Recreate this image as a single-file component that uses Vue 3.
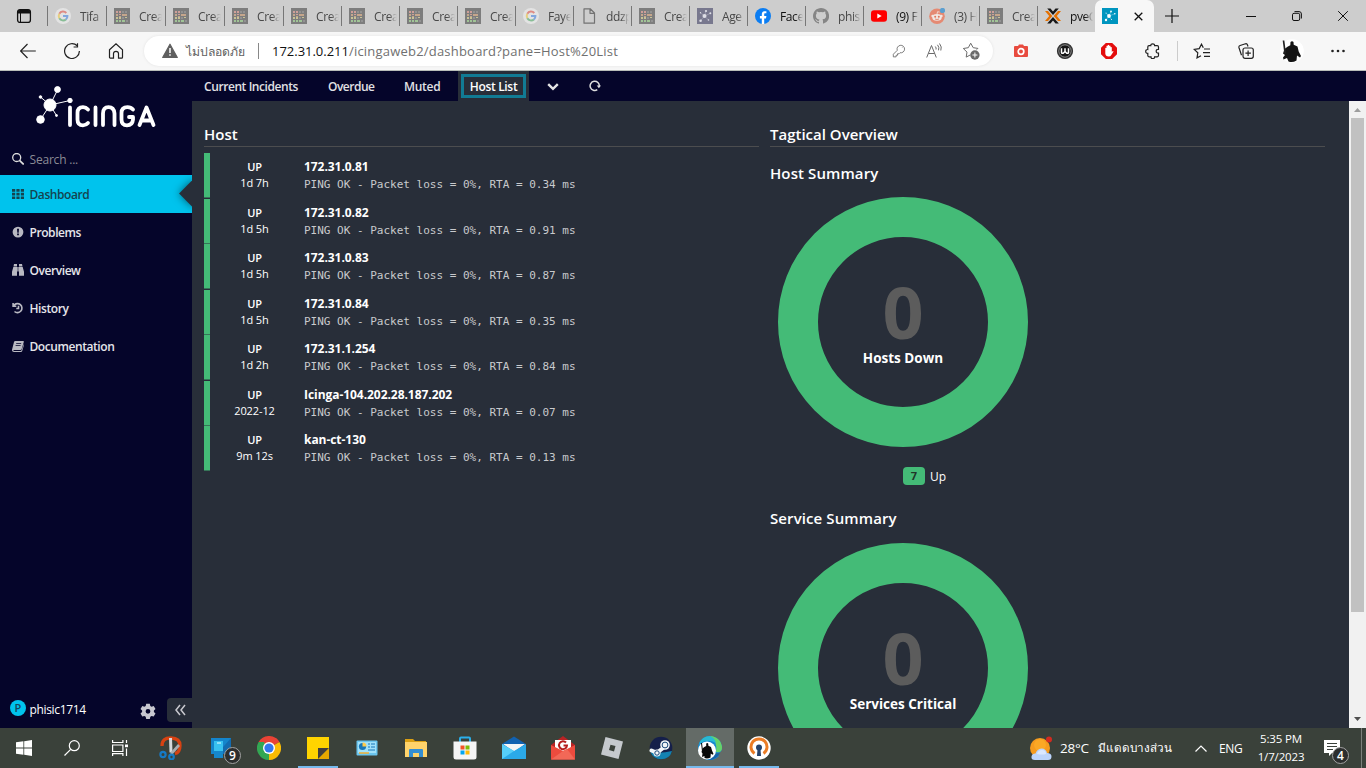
<script setup>
const tabs = [
  { icon: 'google', text: 'Tifa', dim: true, wide: true },
  { icon: 'sheet', text: 'Crea', dim: true, wide: true },
  { icon: 'sheet', text: 'Crea', dim: true, wide: true },
  { icon: 'sheet', text: 'Crea', dim: true, wide: true },
  { icon: 'sheet', text: 'Crea', dim: true },
  { icon: 'sheet', text: 'Crea', dim: true },
  { icon: 'sheet', text: 'Crea', dim: true },
  { icon: 'sheet', text: 'Crea', dim: true },
  { icon: 'google', text: 'Faye', dim: true },
  { icon: 'page', text: 'ddzp', dim: true },
  { icon: 'sheet', text: 'Crea', dim: true },
  { icon: 'agent', text: 'Age', dim: true },
  { icon: 'facebook', text: 'Face' },
  { icon: 'github', text: 'phis', dim: true },
  { icon: 'youtube', text: '(9) F' },
  { icon: 'reddit', text: '(3) H', dim: true },
  { icon: 'sheet', text: 'Crea', dim: true },
  { icon: 'proxmox', text: 'pveC' }
]
const nav = [
  { icon: 'grid', text: 'Dashboard', active: true },
  { icon: 'alert', text: 'Problems' },
  { icon: 'binoculars', text: 'Overview' },
  { icon: 'history', text: 'History' },
  { icon: 'book', text: 'Documentation' }
]
const hosts = [
  { since: '1d 7h', name: '172.31.0.81', rta: '0.34' },
  { since: '1d 5h', name: '172.31.0.82', rta: '0.91' },
  { since: '1d 5h', name: '172.31.0.83', rta: '0.87' },
  { since: '1d 5h', name: '172.31.0.84', rta: '0.35' },
  { since: '1d 2h', name: '172.31.1.254', rta: '0.84' },
  { since: '2022-12', name: 'Icinga-104.202.28.187.202', rta: '0.07' },
  { since: '9m 12s', name: 'kan-ct-130', rta: '0.13' }
]
const apps = [
  { icon: 'snip' }, { icon: 'phone', badge: '9' }, { icon: 'chrome' }, { icon: 'notes', open: true },
  { icon: 'panel' }, { icon: 'folder' }, { icon: 'store' }, { icon: 'mail' }, { icon: 'gmail' },
  { icon: 'roblox' }, { icon: 'steam' }, { icon: 'edge', focused: true }, { icon: 'vpn', open: true }
]
</script>

<template>
  <div class="screen">
    <svg class="defs" aria-hidden="true">
      <symbol id="google" viewBox="0 0 16 16"><circle cx="8" cy="8" r="8" fill="#e3e3e3"/><g fill="none" stroke-width="2"><path d="M4.300 5.700A4.400 4.400 0 0 1 11.300 5" stroke="#de8b84"/><path d="M4.300 5.700a5 5 0 0 0 0 4.600" stroke="#e6cf80"/><path d="M4.300 10.300A4.400 4.400 0 0 0 10.900 11.400" stroke="#88bd96"/><path d="M8 8h4.400a4.400 4.400 0 0 1-1.500 3.400" stroke="#83a7de"/></g></symbol>
      <symbol id="sheet" viewBox="0 0 16 16"><path fill="#7d7d7d" d="M0 0h16v16H0z"/><g><path fill="#cf9f99" d="M2 3h2v2H2zM5 3h2v2H5zM5 6h2v1H5z"/><path fill="#c5a68c" d="M2 6h2v2H2zM8 6h5v2H8zM5 8h2v1H5z"/><path fill="#c8c396" d="M2 9h2v2H2zM5 9h2v2H5zM11 9h2v1h-2z"/><path fill="#a0c496" d="M2 12h2v2H2zM5 12h2v2H5zM8 12h3v2H8z"/><path fill="#929292" d="M8 3h2v2H8zM11 3h2v2h-2zM8 9h2v2H8zM12 12h2v2h-2z"/></g></symbol>
      <symbol id="page" viewBox="0 0 16 16"><path d="M3 .8h6.200L13.500 5v10.200H3zM9 1v4.300h4.300" fill="none" stroke="#727272" stroke-width="1.200" stroke-linejoin="round"/></symbol>
      <symbol id="agent" viewBox="0 0 16 16"><path fill="#78788e" d="M0 0h16v16H0z"/><path stroke="#b5b5c4" stroke-width=".5" d="M7.500 8L9 3M7.500 8l6-2.700M7.500 8l-4 4.800M7.500 8l-4-3.200M7.500 8l4 4"/><g fill="#dedee6"><circle cx="7.500" cy="8" r="2"/><circle cx="9" cy="3" r="1.100"/><circle cx="13.300" cy="5.300" r="1"/><circle cx="3.600" cy="12.800" r="1.300"/><circle cx="3.500" cy="4.800" r=".7"/><circle cx="11.500" cy="12" r=".8"/></g></symbol>
      <symbol id="facebook" viewBox="0 0 16 16"><circle cx="8" cy="8" r="8" fill="#0b7df2"/><path fill="#fff" d="M6.800 16v-5.500H4.900V8.100h1.900V6.400c0-2.100 1.200-3.200 3-3.200l1.600.1v2h-1c-1 0-1.200.5-1.200 1.200v1.600h2.200l-.4 2.400H9.200V16z"/></symbol>
      <symbol id="github" viewBox="0 0 16 16"><path fill="#858585" d="M8 0C3.600 0 0 3.600 0 8c0 3.500 2.300 6.500 5.500 7.600.4.100.5-.2.500-.4v-1.400c-2.200.5-2.700-1-2.700-1-.4-.9-.9-1.100-.9-1.100-.7-.5.100-.5.100-.5.800.1 1.200.8 1.200.8.700 1.200 1.900.9 2.300.7.100-.5.300-.9.500-1.100-1.800-.2-3.600-.9-3.600-4 0-.9.300-1.600.8-2.100-.1-.2-.4-1 .1-2.100 0 0 .7-.2 2.200.8a7.600 7.600 0 0 1 4 0c1.500-1 2.200-.8 2.200-.8.4 1.100.2 1.900.1 2.100.5.6.8 1.300.8 2.100 0 3.100-1.900 3.700-3.700 3.900.3.300.6.800.6 1.500v2.200c0 .2.100.5.600.4A8 8 0 0 0 8 0z"/></symbol>
      <symbol id="youtube" viewBox="0 0 16 16"><rect y="2.300" width="16" height="11.500" rx="3" fill="#f00"/><path fill="#fff" d="M6.300 5.500v5L10.700 8z"/></symbol>
      <symbol id="reddit" viewBox="0 0 16 16"><circle cx="8" cy="8.200" r="7.800" fill="#e58a73"/><ellipse cx="8" cy="9.400" rx="4.700" ry="3.300" fill="#f1e7e3"/><circle cx="3.500" cy="8" r="1.200" fill="#f1e7e3"/><circle cx="12.500" cy="8" r="1.200" fill="#f1e7e3"/><circle cx="6.200" cy="8.700" r="1" fill="#dd765c"/><circle cx="9.800" cy="8.700" r="1" fill="#dd765c"/><path d="M8 6l.6-2.300 2 .4" fill="none" stroke="#f1e7e3" stroke-width=".8"/><path d="M6 11q2 1 4 0" fill="none" stroke="#dd765c" stroke-width=".8"/><circle cx="13.500" cy="2.500" r="2.600" fill="#5b9fd0"/></symbol>
      <symbol id="proxmox" viewBox="0 0 16 16"><path fill="#171717" d="M2.200.5h3.300L8 3.400 10.500.5h3.300L8 7zM2.200 15.500h3.300L8 12.600l2.500 2.900h3.300L8 9z"/><path fill="#e57000" d="M0 3h3l4.300 5L3 13H0l4.200-5zM16 3h-3L8.700 8l4.300 5h3l-4.200-5z"/></symbol>
      <symbol id="icinga-fav" viewBox="0 0 16 16"><path fill="#0095bf" d="M0 0h16v16H0z"/><path stroke="#8fd0e4" stroke-width=".5" d="M7 8l2-4.500M7 8l5.800-2.200M7 8l-3 4M7 8L4 5M7 8l2.500 3.500"/><g fill="#fff"><circle cx="7" cy="8" r="1.900"/><circle cx="9" cy="3.500" r=".9"/><circle cx="12.800" cy="5.800" r=".8"/><circle cx="4" cy="12" r="1.200"/><circle cx="4" cy="5" r=".5"/><circle cx="9.500" cy="11.500" r=".5"/></g></symbol>

      <symbol id="back" viewBox="0 0 16 16"><path d="M.5 8h15.300M7.500 1L.6 8l6.900 7"/></symbol>
      <symbol id="reload" viewBox="0 0 16 16"><path d="M13.200 2.800A7.400 7.400 0 1 0 15.400 8M13.500.2v3.800H9.600"/></symbol>
      <symbol id="home" viewBox="0 0 16 16"><path d="M1.500 6.700L8 .9l6.500 5.800v7.500q0 .9-.9.900H10.500v-4.500q0-2.200-2.500-2.200t-2.500 2.200v4.500H2.400q-.9 0-.9-.9z"/></symbol>
      <symbol id="key" viewBox="0 0 16 16"><path d="M6 7.200A4.300 4.300 0 1 1 9.200 10L8 11.200H6.300v1.700H4.700v1.800H1.500v-3zM11.800 4.100v.5"/></symbol>
      <symbol id="star" viewBox="0 0 18 18"><path d="M14.700 7.600l1.200-1.200-4.700-.7L8.700 1.200 6.300 5.700l-5 .8L5 10.100l-.8 5 4-2.100"/><circle cx="12.900" cy="13" r="4.700" fill="#6a6a6a" stroke="none"/><path d="M12.900 10.500v5M10.400 13h5" stroke="#fff"/></symbol>
      <symbol id="puzzle" viewBox="0 0 16 16"><path d="M4 2.700h1.800C5.600.2 9.800.1 9.600 2.700h2.700q1.200 0 1.200 1.200v2.400c-3.100-.6-3.100 4.200 0 3.800v2.500q0 1.200-1.200 1.200H9.600c.2 2.500-4 2.500-3.600 0H4q-1.200 0-1.200-1.200v-2.300C0 10.600 0 6.200 2.800 6.500V3.900q0-1.200 1.200-1.200z"/></symbol>
      <symbol id="favorites" viewBox="0 0 18 16"><path d="M10.300 4.800L8.500 1.200 6.200 5.600l-5 .8 3.600 3.400-.8 5 4-2.100M11 6h6M10 9.700h7M11 13.300h6"/></symbol>
      <symbol id="collections" viewBox="0 0 16 16"><path d="M3.500 12.200L1 4.700q-.5-1.700 1.100-2.200L7.500.8q1.500-.4 2 1.200l.5 1.500"/><rect x="5" y="5" width="10.300" height="10.300" rx="2"/><path d="M10.100 7.400v5.500M7.400 10.100h5.500"/></symbol>
      <symbol id="person" viewBox="0 0 24 24"><circle cx="12" cy="12" r="11.800" fill="#fff"/><path fill="#141414" d="M10.500 3q1.500-1.500 3 0l.2 2.800 3.800 1.700 1.200 5 2.300 4.500-1 1.500-3-2-.5 5q-4 2.500-8 1L7 19l-3.500 1.500-.5-2 2-2.500-2-1.500 1.500-4.500 3-2.200 2.800-1.500z"/><path stroke="#222" stroke-width="1.700" d="M3.500 1.500l1.700 13"/></symbol>

      <symbol id="grid" viewBox="0 0 12 12"><path d="M0 1h3.200v2.700H0zM4.400 1h3.200v2.700H4.400zM8.800 1H12v2.700H8.800zM0 4.700h3.200v2.700H0zM4.400 4.700h3.200v2.700H4.400zM8.800 4.700H12v2.700H8.800zM0 8.400h3.200v2.700H0zM4.400 8.400h3.200v2.700H4.400zM8.800 8.400H12v2.700H8.800z"/></symbol>
      <symbol id="alert" viewBox="0 0 12 12"><path fill-rule="evenodd" d="M6 .7a5.400 5.400 0 1 1 0 10.800A5.400 5.400 0 0 1 6 .7zM5 2.700l.3 4h1.400l.3-4zM5.100 7.600v1.700h1.800V7.600z"/></symbol>
      <symbol id="binoculars" viewBox="0 0 12 12"><path d="M2 0h3v2.500H1.500zM7 0h3l.5 2.500H7zM1.300 3H5v8.700H-.2V8.500zM7 3h3.700l1.500 5.500v3.200H7zM5.300 3h1.400v4.500H5.300z"/></symbol>
      <symbol id="history" viewBox="0 0 12 12"><path d="M2 3.200A4.500 4.500 0 1 1 2.500 9.500M1.100 1v3.200h3.200M6.500 3.800v2.700H4.300" fill="none" stroke="currentColor" stroke-width="1.600"/></symbol>
      <symbol id="book" viewBox="0 0 12 12"><path fill-rule="evenodd" d="M3.200 1h8q.9 0 .6 1L9.700 9q-.3 1-1.300 1H1.800q-.7 0-.5.500.2.400.9.400h6.500q.7 0 1-.8L11.800 4q.3.500.1 1.200L10.200 11q-.3 1-1.300 1H2Q0 12 0 10.300q0-.7.200-1.300L2 2q.3-1 1.200-1zM4.300 3.200l-.2.700h5l.2-.7zM3.700 5.200l-.2.700h5l.2-.7z"/></symbol>

      <symbol id="snip" viewBox="0 0 24 24"><path d="M3 10Q3 1.700 12 2t9 7.500-5 8" fill="none" stroke="#d64212" stroke-width="3.300"/><path d="M10 2h3l.5 14-3 .5z" fill="#d5d8db"/><path d="M19 8l2 2-8 9-2-2z" fill="#a9adb2"/><g fill="none" stroke="#167ac6" stroke-width="2.200"><circle cx="4" cy="18.500" r="2.600"/><circle cx="12.500" cy="21" r="2.300"/></g></symbol>
      <symbol id="phone" viewBox="0 0 24 24"><path fill="#126bb0" d="M3 2h20v16H3z"/><path fill="#1485cb" d="M3 2h20L9 18H3z"/><path fill="#38c1f0" d="M6 5h9v17H6z"/><path fill="#1687cb" d="M6 15h9v7H6z"/><path stroke="#e6ffff" d="M9 7h4"/></symbol>
      <symbol id="chrome" viewBox="0 0 24 24"><path fill="#e94335" d="M12 12L1.600 6a12 12 0 0 1 20.800 0z"/><path fill="#33a753" d="M12 12v12A12 12 0 0 1 1.600 6z"/><path fill="#fbbc04" d="M12 12L22.400 6A12 12 0 0 1 12 24z"/><path fill="#e94335" d="M12 6h10.400L19 2H5z"/><path fill="#33a753" d="M1.600 6l5.200 9L12 18 7 6z"/><path fill="#fbbc04" d="M17.200 15L12 24l7-4V9z"/><circle cx="12" cy="12" r="6" fill="#fff"/><circle cx="12" cy="12" r="4.600" fill="#3478ed"/></symbol>
      <symbol id="notes" viewBox="0 0 24 24"><path fill="#ffd400" d="M1 1h22v22H1z"/><path fill="#e7a700" d="M12 23L23 12v11z"/><path fill="#423f3d" d="M12 12h11L12 23z"/></symbol>
      <symbol id="panel" viewBox="0 0 24 24"><rect x="1.500" y="4.500" width="21" height="15" rx="1" fill="#6bc5ee"/><path fill="#a1e1fa" d="M3 6h18v11H3z"/><circle cx="7.500" cy="10.500" r="3.600" fill="#1877b9"/><path fill="#ffca4a" d="M7.500 6.500v4h4a4 4 0 0 0-4-4z"/><path stroke="#1877b9" d="M13 8h2m1 0h4M13 11h2m1 0h4M13 14h7"/><path stroke="#f0ac32" stroke-width="1.500" d="M4 17h10"/></symbol>
      <symbol id="folder" viewBox="0 0 24 24"><path fill="#dca013" d="M1 3h8l2 2h11v5H1z"/><path fill="#ffd36b" d="M1 6h22v15H1z"/><path fill="#348ed2" d="M5 21v-7q0-1 1-1h12q1 0 1 1v7h-4v-4H9v4z"/></symbol>
      <symbol id="store" viewBox="0 0 24 24"><path d="M7 6V2.500q0-1 1-1h8q1 0 1 1V6" fill="none" stroke="#2bafe9" stroke-width="2"/><path fill="#f5f5f5" d="M.5 5.500h23V21q0 2.500-2.500 2.500H3Q.5 23.500.5 21z"/><path fill="#f35325" d="M7.500 9.500h4v4h-4z"/><path fill="#81bc06" d="M12.500 9.500h4v4h-4z"/><path fill="#05a6f0" d="M7.500 14.500h4v4h-4z"/><path fill="#ffba08" d="M12.500 14.500h4v4h-4z"/></symbol>
      <symbol id="mail" viewBox="0 0 24 24"><path fill="#1262b0" d="M0 8l12-7.500L24 8v4H0z"/><path fill="#f5f5f5" d="M1 8h22L12 16z"/><path fill="#2ba9e8" d="M0 8l12 7 12-7v15H0z"/><path fill="#56cef8" d="M0 8l12 7L0 23z"/></symbol>
      <symbol id="gmail" viewBox="0 0 24 24"><path fill="#b92324" d="M0 9l12-9 12 9v8H0z"/><path fill="#fff" d="M4 4h16v12H4z"/><path d="M15 6.500A4 4 0 1 0 16 9.500h-3.500" fill="none" stroke="#b51d1d" stroke-width="2"/><path fill="#ed4b3e" d="M0 9l12 6 12-6v14.500H0z"/><path fill="#f26857" d="M0 23.500L12 15l4-2 8 10.500z"/></symbol>
      <symbol id="roblox" viewBox="0 0 24 24"><path fill="#c5c9cd" fill-rule="evenodd" d="M5.500 1L23 5.500 18.500 23 1 18.500zM10.500 8.800L9 14l5 1.500L15.500 10z"/></symbol>
      <symbol id="steam" viewBox="0 0 24 24"><circle cx="12" cy="12" r="11.300" fill="#151f4a"/><path fill="#1382b2" d="M1.500 16q10 2 21.500-1-2 8-11 8.300Q4 23 1.500 16z"/><path fill="none" stroke="#f2f5f8" stroke-width="4" stroke-linecap="round" d="M2.500 14.500l5.500 2.300 7-5.500"/><circle cx="16" cy="9" r="4.800" fill="#f2f5f8"/><circle cx="8" cy="17" r="3.500" fill="#f2f5f8"/><circle cx="16" cy="9" r="2.900" fill="#f2f5f8" stroke="#174778"/><circle cx="8" cy="17" r="2.200" fill="none" stroke="#174778"/></symbol>
      <symbol id="edge" viewBox="0 0 24 24"><path fill="#168ad0" d="M0 12A12 12 0 1 1 24 12c0 5-5 6-8 5l5 3q-4 4-9 4A12 12 0 0 1 0 12z"/><path fill="#67d36a" d="M12 0a12 12 0 0 1 12 12q0 5-6 4 2-10-6-16z"/><path fill="#29b9d3" d="M1 8Q4 0 12 0q5 2 6 7-9-5-17 1z"/><path fill="#1664ab" d="M14 18l8-1q-3 6-10 7z"/><circle cx="9" cy="14.500" r="9" fill="#fff"/><path fill="#090909" d="M8.200 7.500q1-1 2 0l.2 2.300 2.600 1.200 1 3.500 1.500 3.500-1 .8-1.700-1.300-.3 4q-3 1.500-6 .5L6.500 20 4 21l.5-3.500L3.500 16l1-3.500 1.800-1.500 1.900-1z"/><path stroke="#090909" d="M3.500 7l1 8"/></symbol>
      <symbol id="vpn" viewBox="0 0 24 24"><circle cx="12" cy="12" r="11.700" fill="#fff"/><path d="M7.500 17.500A8 8 0 1 1 16.500 17.500" fill="none" stroke="#ea7c25" stroke-width="3"/><circle cx="12" cy="11.500" r="3" fill="#24426b"/><path fill="#24426b" d="M10.500 13h3l.5 7h-4z"/></symbol>
    </svg>

    <header class="tabstrip">
      <div class="tab-menu"><svg width="16" height="16" viewBox="0 0 16 16"><rect x="1.600" y="1.600" width="12.800" height="12.800" rx="2.500" fill="none" stroke="#111" stroke-width="1.300"/><path d="M2 5V3.500Q2 2 4 2h8q2 0 2 1.500V5z" stroke="#111" fill="#111"/><path d="M4.500 5v9" stroke="#111"/></svg></div>
      <div v-for="(t, i) in tabs" :key="i" class="tab" :class="{ wide: t.wide, dim: t.dim }">
        <svg class="fav"><use :href="'#' + t.icon" /></svg><span>{{ t.text }}</span>
      </div>
      <div class="tab-active"><svg class="fav"><use href="#icinga-fav" /></svg><svg width="9" height="9" viewBox="0 0 9 9"><path d="M.7.7l7.600 7.600M8.300.7L.7 8.300" stroke="#111" stroke-width="1.300"/></svg></div>
      <div class="new-tab"><svg width="14" height="14" viewBox="0 0 14 14"><path d="M7 0v14M0 7h14" stroke="#111" stroke-width="1.200"/></svg></div>
      <div class="win">
        <svg viewBox="0 0 10 10"><path d="M0 5.500h10"/></svg>
        <svg viewBox="0 0 10 10"><rect x=".5" y="2.300" width="7.200" height="7.200" rx="1.500"/><path d="M2.500.6H7Q9.400.6 9.400 3v4.500"/></svg>
        <svg viewBox="0 0 10 10"><path d="M.2.2l9.600 9.600M9.800.2L.2 9.800"/></svg>
      </div>
    </header>

    <div class="toolbar">
      <div class="slot"><svg><use href="#back" /></svg></div>
      <div class="slot"><svg><use href="#reload" /></svg></div>
      <div class="slot"><svg><use href="#home" /></svg></div>
      <div class="address">
        <svg class="warn" viewBox="0 0 16 16"><path fill="#5f5f5f" stroke="#5f5f5f" stroke-linejoin="round" d="M8 1.200L15.300 14.500H.7z"/><path d="M8 5v5M8 11.300v1.500" stroke="#fff" stroke-width="1.500"/></svg>
        <span class="unsafe">ไม่ปลอดภัย</span>
        <i class="bar"></i>
        <span class="url"><b>172.31.0.211</b>/icingaweb2/dashboard?pane=Host%20List</span>
        <span class="address-icons">
          <svg width="14" height="14"><use href="#key" /></svg>
          <svg width="16" height="16" viewBox="0 0 16 16"><path d="M.7 14.500L5.500 2.500 10.300 14.500M2.500 10.500h6M9.300 3.500q1.300 1.500.7 3M11.500 1.800q2.200 2.500 1 5.500M13.500.5q2.800 3.500 1.300 7"/></svg>
          <svg width="18" height="18"><use href="#star" /></svg>
        </span>
      </div>
      <div class="extensions">
        <div class="slot"><svg viewBox="0 0 16 16"><path d="M2 3h3l1-1.500h4L11 3h3q1 0 1 1v9q0 1-1 1H2q-1 0-1-1V4q0-1 1-1z" fill="#e84b3f" stroke="none"/><circle cx="8" cy="8.500" r="2.800" fill="#e84b3f" stroke="#fff" stroke-width="1.700"/></svg></div>
        <div class="slot"><svg viewBox="0 0 16 16"><circle cx="8" cy="8" r="7.500" fill="#161616" stroke="#333"/><circle cx="8" cy="8" r="6.200" fill="none" stroke="#ccc" stroke-width=".7"/><path d="M4.500 5.300v4.200q0 .8.800.8h.9L8 8.500l1.800 1.800h.9q.8 0 .8-.8V5.300M8 5.300v3" stroke="#fff" stroke-width="1.500"/></svg></div>
        <div class="slot"><svg viewBox="0 0 16 16"><path d="M4.800 0h6.400L16 4.800v6.400L11.200 16H4.800L0 11.200V4.800z" fill="#e40d0d" stroke="none"/><path fill="#fff" stroke="none" d="M4.300 5q.8-.7 1.200 0V3q.8-1 1.300 0v-.8q.8-.8 1.300 0V3q1-.8 1.400 0v1.200q1-.7 1.300.2V9l1-1q.9.100.6.800L10.300 12Q9.500 13.500 7.700 13.500q-3.200 0-3.400-3z"/></svg></div>
        <div class="slot"><svg><use href="#puzzle" /></svg></div>
      </div>
      <div class="profile">
        <div class="slot"><svg class="w18"><use href="#favorites" /></svg></div>
        <div class="slot"><svg><use href="#collections" /></svg></div>
        <div class="slot face"><svg class="avatar"><use href="#person" /></svg></div>
        <div class="slot more"><svg viewBox="0 0 16 16"><g fill="#222" stroke="none"><circle cx="2.500" cy="8" r="1.300"/><circle cx="8" cy="8" r="1.300"/><circle cx="13.500" cy="8" r="1.300"/></g></svg></div>
      </div>
    </div>

    <div class="icinga">
      <aside>
        <svg class="logo" viewBox="0 0 122 44">
          <g stroke="#fff" stroke-width="1" fill="#fff"><path d="M15 19L22.500 4M15 19L5.500 11M15 19L35 14.500M15 19L5.500 33.500M15 19l6.500 10.500"/><circle cx="15" cy="19" r="6"/><circle cx="22.500" cy="3.500" r="2.900"/><circle cx="5.500" cy="11" r="1.300"/><circle cx="35" cy="14.500" r="2.200"/><circle cx="5.500" cy="33.500" r="3.800"/><circle cx="21.500" cy="29.500" r="1"/></g>
          <g fill="none" stroke="#fff" stroke-width="3.800" stroke-linecap="round" stroke-linejoin="round"><path d="M35 21.500V39M53 23.500Q51 21.200 48 21.200 42.500 21.200 42.500 27V33.500Q42.500 39.300 48 39.300 51 39.300 53 37M60.500 21.500V39M68 39V27.500Q68 21.200 73.500 21.200T79.500 27.500V39M98 23.500Q96 21.200 92.500 21.200 86.500 21.200 86.500 27V33.500Q86.500 39.300 92 39.300T98 33.500V31H94M104.500 39L111.500 21.500 118.500 39M108 34.500H115.500"/></g>
        </svg>
        <div class="search"><svg viewBox="0 0 12 12"><circle cx="4.700" cy="4.500" r="4" fill="none" stroke="#ddd" stroke-width="1.300"/><path d="M7.500 7.300l4.200 4.200" stroke="#ddd" stroke-width="1.700"/></svg><span>Search ...</span></div>
        <nav>
          <div v-for="n in nav" :key="n.text" class="item" :class="{ active: n.active }">
            <svg><use :href="'#' + n.icon" /></svg><span>{{ n.text }}</span><i v-if="n.active" class="notch"></i>
          </div>
        </nav>
        <footer>
          <span class="user-dot">P</span><span class="user">phisic1714</span>
          <svg class="gear" viewBox="0 0 16 16"><path fill="#c8c8d0" fill-rule="evenodd" d="M6.200.8h3.600l.5 2.100 1.300.8 2.100-.7 1.800 3.100-1.600 1.500v1.500l1.600 1.500-1.800 3-2.100-.6-1.300.8-.5 2.100H6.200l-.5-2.100-1.300-.8-2.100.6-1.800-3 1.600-1.500V7.600L.5 6.100 2.300 3l2.100.7 1.300-.8zM8 5.900a2.400 2.400 0 1 0 0 4.800 2.400 2.400 0 0 0 0-4.800z"/></svg>
          <span class="collapse"><svg width="11" height="12" viewBox="0 0 11 12"><path d="M5 1L1 6l4 5M10 1L6 6l4 5" fill="none" stroke="#c9c9cf" stroke-width="1.500"/></svg></span>
        </footer>
      </aside>

      <section class="content">
        <div class="panes">
          <span class="p1">Current Incidents</span><span class="p2">Overdue</span><span class="p3">Muted</span>
          <span class="current">Host List</span>
          <svg class="chev" width="12" height="8" viewBox="0 0 12 8"><path d="M1.200 1.200L6 5.800l4.800-4.600" fill="none" stroke="#e5e5e5" stroke-width="2.400"/></svg>
          <svg width="12" height="12" viewBox="0 0 12 12"><path d="M8.300 9.700A4.600 4.600 0 1 1 10.300 6.300" fill="none" stroke="#ddd" stroke-width="1.500"/><path fill="#ddd" d="M7.700 5.500H12L9.900 8.300z"/></svg>
        </div>
        <div class="body">
          <div class="scroll-area">
            <div class="col">
              <h1>Host</h1>
              <ul>
                <li v-for="h in hosts" :key="h.name">
                  <div class="state"><b>UP</b><span>{{ h.since }}</span></div>
                  <div class="info"><strong>{{ h.name }}</strong><code>PING OK - Packet loss = 0%, RTA = {{ h.rta }} ms</code></div>
                </li>
              </ul>
            </div>
            <div class="col">
              <h1>Tagtical Overview</h1>
              <h2>Host Summary</h2>
              <div class="donut"><span class="zero">0</span><span class="label">Hosts Down</span></div>
              <div class="legend"><b>7</b><span>Up</span></div>
              <h2 class="second">Service Summary</h2>
              <div class="donut"><span class="zero">0</span><span class="label">Services Critical</span></div>
            </div>
          </div>
          <div class="scrollbar"><svg width="7" height="4" viewBox="0 0 7 4"><path fill="#9d9d9d" d="M0 4l3.500-4L7 4z"/></svg><i></i><svg width="7" height="4" viewBox="0 0 7 4"><path fill="#505050" d="M0 0l3.500 4L7 0z"/></svg></div>
        </div>
      </section>
    </div>

    <div class="taskbar">
      <div class="sys"><svg width="16" height="16" viewBox="0 0 16 16"><path fill="#fff" d="M0 2.300L7.400 1.300v6.300H0zM8.200 1.200L16 0v7.600H8.200zM0 8.400h7.400v6.300L0 13.700zM8.200 8.400H16V16l-7.800-1.200z"/></svg></div>
      <div class="sys"><svg width="16" height="16" viewBox="0 0 16 16"><circle cx="10.300" cy="5.700" r="5" fill="none" stroke="#fff" stroke-width="1.200"/><path d="M6.700 9.300L.5 15.500" stroke="#fff" stroke-width="1.200"/></svg></div>
      <div class="sys"><svg width="16" height="16" viewBox="0 0 16 16"><path fill="none" stroke="#fff" stroke-width="1.200" d="M.6 0v2.500h10.300V0M.6 5h10.300v6.500H.6zM.6 16v-2.300h10.300V16M14.500 0v3M14.500 8.500V16"/><path fill="#fff" d="M13 4.500h3v2.700h-3z"/></svg></div>
      <div class="apps">
        <div v-for="a in apps" :key="a.icon" class="app" :class="{ open: a.open, focused: a.focused }"><svg><use :href="'#' + a.icon" /></svg><em v-if="a.badge">{{ a.badge }}</em></div>
      </div>
      <div class="tray">
        <svg width="24" height="25" viewBox="0 0 24 25"><circle cx="11" cy="12" r="10" fill="#f69b1e"/><circle cx="11" cy="9" r="6" fill="#ffb52c" opacity=".5"/><circle cx="20" cy="3.500" r="3" fill="#d22b20"/><path fill="#bcd4fb" d="M6 24Q2 24 2.500 20.500 3 17.500 6.500 17.500 8 13 12.500 12.500 17 12.500 18 17q4.500 0 4.500 3.500T19 24z"/><path fill="#dbe8ff" d="M8 18q1-4 5-4t4 4q-4 1-9 0z"/></svg>
        <span class="temp">28°C</span><span class="thai">มีแดดบางส่วน</span>
        <svg class="up" width="12" height="7" viewBox="0 0 12 7"><path d="M.5 6.500L6 1l5.500 5.500" fill="none" stroke="#fff" stroke-width="1.200"/></svg>
        <span class="lang">ENG</span>
        <span class="clock"><span>5:35 PM</span><span>1/7/2023</span></span>
        <span class="notif"><svg width="16" height="16" viewBox="0 0 16 16"><path fill="#fff" d="M0 0h16v13H8l-3 3v-3H0z"/><path stroke="#3b413b" d="M3 3.500h10M3 6.500h10M3 9.500h6"/></svg><em>4</em></span>
        <i class="peek"></i>
      </div>
    </div>
  </div>
</template>

<style>
body { overflow: hidden; }
</style>
<style scoped>
* { box-sizing: border-box; }
.screen { width: 1366px; height: 768px; display: flex; flex-direction: column; overflow: hidden; font-family: "Open Sans", "Noto Sans", sans-serif; font-size: 12px; color: #fff; white-space: nowrap; }
.defs { position: absolute; width: 0; height: 0; }
svg { flex: none; display: block; }
.fav { width: 16px; height: 16px; }

.tabstrip { height: 32px; display: flex; align-items: center; background: #cdcdcd; color: #111; }
.tab-menu { width: 47px; padding-left: 16px; }
.tab { width: 58px; height: 20px; border-left: 1px solid #777; display: flex; align-items: center; padding-left: 7px; overflow: hidden; }
.tab.wide { width: 59px; }
.tab span { margin-left: 9px; width: 23px; overflow: hidden; letter-spacing: -.4px; mask-image: linear-gradient(90deg, #000 65%, transparent); }
.tab.dim span { color: #484848; }
.tab-active { width: 59px; height: 32px; border-radius: 7px 7px 0 0; background: #f7f7f7; display: flex; align-items: center; gap: 16px; padding-left: 7px; }
.new-tab { width: 74px; padding-left: 11px; }
.win { display: flex; gap: 36px; padding-left: 18px; }
.win svg { width: 10px; height: 10px; overflow: visible; fill: none; stroke: #111; }

.toolbar { height: 39px; padding-left: 6px; display: flex; align-items: center; background: #f7f7f7; border-bottom: 1px solid #b9bdb9; }
.slot { width: 44px; display: flex; justify-content: center; }
.toolbar svg { width: 16px; height: 16px; fill: none; stroke: #222; stroke-width: 1.2; overflow: visible; }
.address { width: 849px; height: 30px; margin-left: 6px; border-radius: 15px; background: #fff; box-shadow: 0 0 3px #e2e2e2; display: flex; align-items: center; padding-left: 18px; color: #707070; }
.unsafe { width: 60px; margin-left: 8px; color: #5f5f5f; font-size: 12.2px; }
.bar { width: 1px; height: 16px; background: #888; margin: 0 13px 0 12px; }
.url { font-size: 13px; letter-spacing: .21px; }
.url b { font-weight: 400; color: #111; letter-spacing: -.02px; }
.address-icons { display: flex; align-items: center; gap: 20px; margin-left: auto; padding-right: 13px; }
.toolbar .address-icons svg { stroke: #6b6b6b; stroke-width: 1; }
.toolbar .address-icons svg:first-child { width: 14px; height: 14px; }
.toolbar .address-icons svg:last-child { width: 18px; height: 18px; }
.extensions { display: flex; align-items: center; margin-left: 6px; }
.profile { display: flex; align-items: center; height: 20px; border-left: 1px solid #ccc; margin-left: 2px; padding-left: 2px; }
.face { margin-left: 2px; }
.toolbar .w18 { width: 18px; }
.toolbar .avatar { width: 24px; height: 24px; stroke: none; }
.more { margin-left: 2px; }

.icinga { height: 657px; display: flex; background: #05052a; }
aside { width: 192px; display: flex; flex-direction: column; }
.logo { width: 122px; height: 44px; margin: 15px 0 0 35px; overflow: visible; }
.search { height: 30px; margin-top: 14px; margin-bottom: 1px; display: flex; align-items: center; padding-left: 12px; color: #8b8b95; letter-spacing: -.2px; }
.search svg { width: 12px; height: 12px; margin-right: 5.5px; }
.item { height: 38px; display: flex; align-items: center; padding-left: 12px; position: relative; font-weight: 600; color: #e6e6ea; letter-spacing: -.43px; }
.item svg { width: 12px; height: 12px; margin-right: 5.5px; fill: currentColor; color: #b9b9c2; }
.item.active { background: #00c3ed; color: #15444f; overflow: hidden; }
.item.active svg { color: #15444f; }
.notch { position: absolute; right: -10px; top: 9px; width: 19px; height: 19px; transform: rotate(45deg); background: #282e39; box-shadow: 0 0 8px #0008; }
footer { margin-top: auto; height: 36px; display: flex; align-items: center; padding-left: 10px; }
.user-dot { width: 16px; height: 16px; margin-top: -5px; border-radius: 50%; background: #00c3ed; color: #16455c; font-weight: 600; font-size: 11px; line-height: 16px; text-align: center; }
.user { width: 114px; padding-left: 3.5px; margin-top: -1px; letter-spacing: -.35px; }
.gear { width: 16px; height: 16px; margin-top: 1px; }
.collapse { margin-left: auto; width: 25px; height: 24px; border-radius: 4px 0 0 4px; background: #282e39; display: flex; align-items: center; padding-left: 8px; }

.content { flex: 1; display: flex; flex-direction: column; }
.panes { height: 30px; display: flex; align-items: center; padding-left: 12px; font-weight: 600; color: #e1e1e5; letter-spacing: -.42px; }
.p1 { width: 124px; } .p2 { width: 76px; letter-spacing: -.5px; } .p3 { width: 54px; letter-spacing: -.3px; }
.current { width: 71px; height: 30px; background: #282e39; color: #fff; display: flex; align-items: center; justify-content: center; position: relative; letter-spacing: -.32px; }
.current::after { content: ""; position: absolute; inset: 3px; border: 3px solid #117b94; }
.chev { margin: 1px 30px 0 18px; }
.body { height: 627px; display: flex; background: #282e39; }
.scroll-area { flex: 1; padding: 0 24px 0 12px; display: flex; gap: 11px; overflow: hidden; }
.col { flex: 1; }
h1 { height: 46px; margin: 0; padding-top: 23px; border-bottom: 1px solid #4c4d4f; font-size: 15px; line-height: 20px; font-weight: 600; }
h2 { margin: 16px 0 14px; font-size: 15px; line-height: 20px; font-weight: 600; letter-spacing: .1px; }
ul { list-style: none; margin: 6px 0 0; padding: 0; }
li { height: 45.5px; display: flex; padding-top: 6px; background: linear-gradient(#44bb77, #44bb77) 0 0 / 6px 44.5px no-repeat; }
.state { width: 100px; padding-left: 1px; display: flex; flex-direction: column; text-align: center; font-size: 11px; line-height: 16px; letter-spacing: -.1px; }
.state b { font-weight: 600; }
.info { display: flex; flex-direction: column; line-height: 16px; width: 300px; }
strong { font-weight: 700; font-size: 12px; letter-spacing: -.05px; }
code { font-family: "DejaVu Sans Mono", monospace; font-size: 11px; line-height: 20px; color: #c8cacd; }
.donut { width: 250px; height: 250px; margin-left: 8px; border: 40px solid #44bb77; border-radius: 50%; display: flex; flex-direction: column; align-items: center; }
.zero { margin-top: 38px; font-size: 72px; line-height: 72px; font-weight: 700; color: #5c5c5c; }
.label { margin-top: 2px; font-size: 13.5px; line-height: 18px; font-weight: 700; }
.legend { margin: 20px 0 0 133px; height: 18px; display: flex; align-items: center; gap: 5px; }
.legend b { width: 22px; height: 18px; border-radius: 4px; background: #44bb77; color: #203528; text-align: center; line-height: 18px; font-size: 11px; }
.second { margin-top: 23px; margin-bottom: 15px; }
.scrollbar { width: 17px; background: #f1f1f1; display: flex; flex-direction: column; align-items: center; padding: 7px 0; }
.scrollbar i { width: 13px; height: 494px; background: #c1c1c1; margin: 6px 0 auto; }

.taskbar { height: 40px; background: #3a413a; display: flex; align-items: center; }
.sys { width: 48px; display: flex; justify-content: center; }
.apps { display: flex; margin-left: 3px; }
.app { width: 48px; height: 40px; margin-right: 1px; display: flex; align-items: center; justify-content: center; position: relative; }
.app svg { width: 24px; height: 24px; }
.app.focused { background: #646b67; border-bottom: 2px solid #76b9ed; padding-top: 2px; }
.app.open::after { content: ""; position: absolute; left: 4px; right: 4px; bottom: 0; height: 2px; background: #76b9ed; }
em { position: absolute; width: 17px; height: 17px; border: 1px solid #a2a2a2; border-radius: 50%; background: #2c2e2e; font-style: normal; font-size: 12px; line-height: 15px; text-align: center; font-weight: 600; }
.app em { left: 28px; top: 19px; }
.tray { flex: 1; height: 40px; margin-left: 245px; display: flex; align-items: center; }
.temp { width: 38px; margin-left: 7px; font-size: 13.5px; letter-spacing: -.2px; }
.thai { width: 72px; font-size: 11.7px; }
.up { margin-left: 25px; }
.lang { margin-left: 12px; width: 33px; letter-spacing: -.4px; }
.clock { display: flex; flex-direction: column; align-items: center; width: 60px; line-height: 18px; font-size: 11.5px; letter-spacing: -.15px; margin-left: -1px; }
.notif { position: relative; margin-left: 13px; }
.notif em { left: 8px; top: 7px; }
.peek { width: 1px; height: 40px; margin-left: auto; margin-right: 4px; background: #7b807b; }
</style>
